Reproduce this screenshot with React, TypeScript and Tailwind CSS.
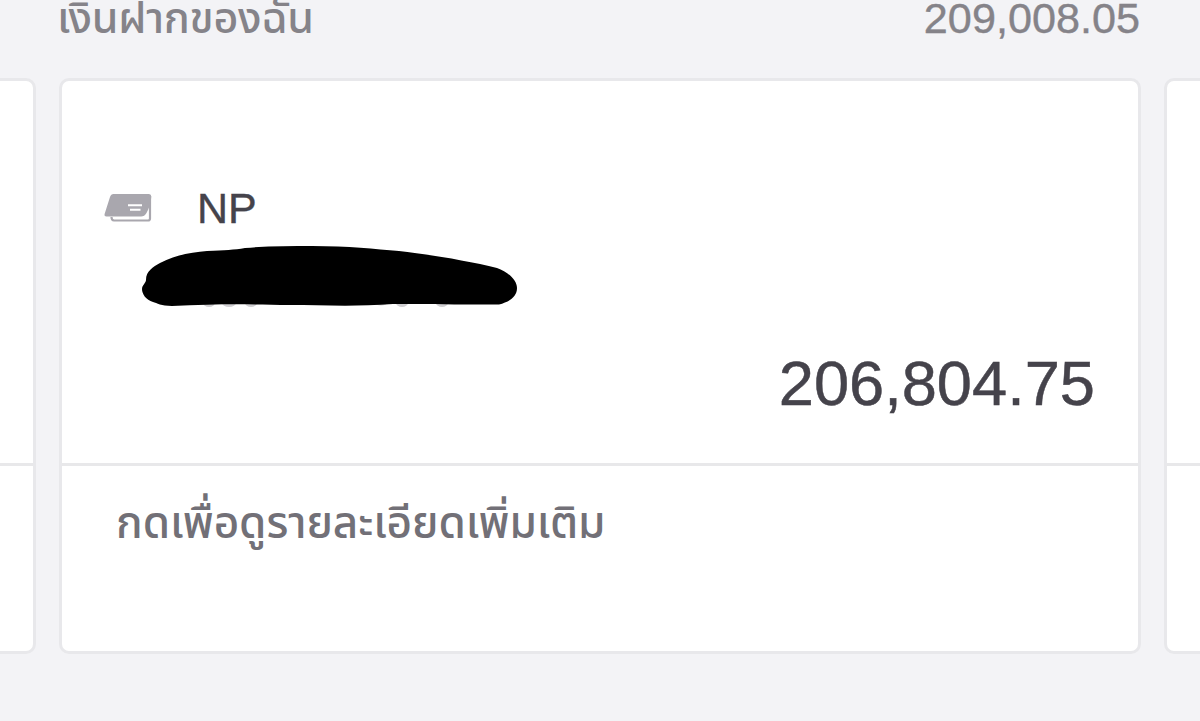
import type { ReactNode } from 'react';

interface CardProps {
  children?: ReactNode;
  footer?: ReactNode;
}

function PassbookIcon() {
  return (
    <svg width="48" height="30" viewBox="0 0 48 30" fill="none">
      <path d="M46 3V25.5Q46 27.500 44 27.500H10Q7.500 27.500 7.500 24" stroke="#a9a7ae" strokeWidth="2.200" />
      <path
        d="M9.500 1H45Q47.300 1 47.300 3.500C47 9 45 16 42.500 20Q40.500 23.500 37 23.500H2.500Q.1 23.500.6 21L6 4Q7 1 9.500 1Z"
        fill="#a9a7ae"
      />
      <path d="M24 12.300H38M26 16.800H36.500" stroke="white" strokeWidth="2" />
    </svg>
  );
}

// Marker stroke that hides the account number
function Redaction() {
  return (
    <svg width="376" height="62" viewBox="0 0 376 62">
      <g fill="#cfced1">
        <ellipse cx="67" cy="57" rx="6" ry="4" />
        <ellipse cx="87" cy="57" rx="7" ry="4" />
        <ellipse cx="109" cy="57" rx="6" ry="4" />
        <ellipse cx="239" cy="57" rx="6" ry="2.500" />
        <ellipse cx="260" cy="57" rx="6" ry="4" />
        <ellipse cx="300" cy="57" rx="6" ry="4" />
      </g>
      <path d="M4 34C4 25 11 21 18 17C34 9 50 6 65 5C83 4 92 4 103 2C125 0 148 0 170 0C207 0 233 3 257 5C285 8 327 15 355 22C366 26 375 34 375 42C375 51 367 56 357 58.500C322 59 282 57.500 251 58C211 61 178 59 148 59C105 58 71 58 30 60C19 60 15 57 11 56C4 54 0 48 0 43C0 39 4 37 4 34Z" />
    </svg>
  );
}

function Card({ children, footer }: CardProps) {
  return (
    <section className="flex h-[576px] w-[1082px] shrink-0 flex-col overflow-hidden rounded-[10px] border-3 border-[#e8e8eb] bg-white">
      <div className="h-[385px] border-b-3 border-[#e8e8ea]">{children}</div>
      <div className="flex-1">{footer}</div>
    </section>
  );
}

export default function App() {
  return (
    <main className="h-[721px] w-[1200px] overflow-hidden bg-[#f3f3f6] font-['Liberation_Sans','Noto_Sans_Thai','Noto_Sans',sans-serif]">
      <header className="flex h-[78px] items-start justify-between pr-[60px] pl-[57px] text-[#858389]">
        <h1 className="-mt-[8px] text-[43px] leading-[52px] font-medium tracking-[-0.300px] whitespace-nowrap">
          เงินฝากของฉัน
        </h1>
        <span className="-mt-[7px] text-[43.200px] leading-[50px] [-webkit-text-stroke:0.4px]">209,008.05</span>
      </header>

      <div className="flex justify-center gap-[23px]">
        <Card />
        <Card
          footer={
            <p className="pt-[22px] pl-[54px] text-[44px] leading-[70px] font-medium tracking-[-0.050px] whitespace-nowrap text-[#727077]">
              กดเพื่อดูรายละเอียดเพิ่มเติม
            </p>
          }
        >
          <div className="flex items-center pt-[102px] pl-[42px]">
            <PassbookIcon />
            <span className="ml-[45px] text-[43px] leading-[50px] text-[#45434b] [-webkit-text-stroke:0.4px]">NP</span>
          </div>
          <div className="mt-[13px] ml-[80px]">
            <Redaction />
          </div>
          <div className="mt-[39px] pr-[43px] text-right text-[63.200px] leading-[72px] text-[#45434b] [-webkit-text-stroke:0.5px]">
            206,804.75
          </div>
        </Card>
        <Card />
      </div>
    </main>
  );
}
